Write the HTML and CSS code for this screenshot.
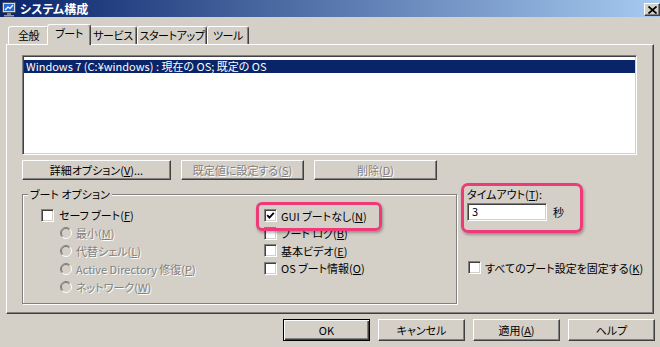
FILE: index.html
```html
<!DOCTYPE html>
<html lang="ja">
<head>
<meta charset="utf-8">
<title>システム構成</title>
<link rel="stylesheet" href="styles.css">
</head>
<body>
<div class="window">
  <header class="titlebar">
    <svg class="app-icon" width="16" height="16" viewBox="0 0 16 16">
      <rect x="1.5" y="1.5" width="13" height="10" rx="1" fill="#d8d8d8" stroke="#505050"/>
      <rect x="3" y="3" width="10" height="7" fill="#2a6ad8"/>
      <path d="M4 9 L7 6 L9 7.5 L12 4" stroke="#fff" stroke-width="1.2" fill="none"/>
      <rect x="6" y="12" width="4" height="2" fill="#808080"/>
      <rect x="3" y="14" width="10" height="1.5" fill="#9a9a9a"/>
    </svg>
    <span class="title">システム構成</span>
    <span class="close">
      <svg width="9" height="8" viewBox="0 0 9 8"><path d="M0.5 0.5 L8.5 7.5 M8.5 0.5 L0.5 7.5" stroke="#000" stroke-width="1.7"/></svg>
    </span>
  </header>
  <main class="client">
    <nav class="tabs">
      <span class="tab">全般</span>
      <span class="tab active">ブート</span>
      <span class="tab">サービス</span>
      <span class="tab">スタートアップ</span>
      <span class="tab">ツール</span>
    </nav>
    <section class="panel">
      <div class="listbox">
        <div class="list-item selected">Windows 7 (C:¥windows) : 現在の OS; 既定の OS</div>
      </div>
      <div class="button-row">
        <button class="btn btn-wide">詳細オプション(<u>V</u>)...</button>
        <button class="btn btn-mid" disabled>既定値に設定する(<u>S</u>)</button>
        <button class="btn btn-mid" disabled>削除(<u>D</u>)</button>
      </div>
      <div class="lower">
        <fieldset class="group">
          <legend>ブート オプション</legend>
          <div class="group-cols">
            <div class="col col-left">
              <div class="opt"><span class="cb"></span><span>セーフ ブート(<u>F</u>)</span></div>
              <div class="opt radio disabled"><svg class="rb" width="12" height="12" viewBox="0 0 12 12"><circle cx="6" cy="6" r="4.5" fill="#d4d0c8"/><path d="M9.9 2.1 A5.5 5.5 0 0 0 2.1 9.9" stroke="#808080" fill="none"/><path d="M2.1 9.9 A5.5 5.5 0 0 0 9.9 2.1" stroke="#fff" fill="none"/><path d="M9.2 2.8 A4.5 4.5 0 0 0 2.8 9.2" stroke="#404040" fill="none" opacity=".55"/></svg><span>最小(<u>M</u>)</span></div>
              <div class="opt radio disabled"><svg class="rb" width="12" height="12" viewBox="0 0 12 12"><circle cx="6" cy="6" r="4.5" fill="#d4d0c8"/><path d="M9.9 2.1 A5.5 5.5 0 0 0 2.1 9.9" stroke="#808080" fill="none"/><path d="M2.1 9.9 A5.5 5.5 0 0 0 9.9 2.1" stroke="#fff" fill="none"/><path d="M9.2 2.8 A4.5 4.5 0 0 0 2.8 9.2" stroke="#404040" fill="none" opacity=".55"/></svg><span>代替シェル(<u>L</u>)</span></div>
              <div class="opt radio disabled"><svg class="rb" width="12" height="12" viewBox="0 0 12 12"><circle cx="6" cy="6" r="4.5" fill="#d4d0c8"/><path d="M9.9 2.1 A5.5 5.5 0 0 0 2.1 9.9" stroke="#808080" fill="none"/><path d="M2.1 9.9 A5.5 5.5 0 0 0 9.9 2.1" stroke="#fff" fill="none"/><path d="M9.2 2.8 A4.5 4.5 0 0 0 2.8 9.2" stroke="#404040" fill="none" opacity=".55"/></svg><span>Active Directory 修復(<u>P</u>)</span></div>
              <div class="opt radio disabled"><svg class="rb" width="12" height="12" viewBox="0 0 12 12"><circle cx="6" cy="6" r="4.5" fill="#d4d0c8"/><path d="M9.9 2.1 A5.5 5.5 0 0 0 2.1 9.9" stroke="#808080" fill="none"/><path d="M2.1 9.9 A5.5 5.5 0 0 0 9.9 2.1" stroke="#fff" fill="none"/><path d="M9.2 2.8 A4.5 4.5 0 0 0 2.8 9.2" stroke="#404040" fill="none" opacity=".55"/></svg><span>ネットワーク(<u>W</u>)</span></div>
            </div>
            <div class="col col-right">
              <div class="opt highlight-gui"><span class="cb checked"><svg width="9" height="9" viewBox="0 0 9 9"><path d="M1.2 4.2 L3.4 6.6 L7.8 1.8" stroke="#000" stroke-width="1.8" fill="none"/></svg></span><span>GUI ブートなし(<u>N</u>)</span></div>
              <div class="opt"><span class="cb"></span><span>ブート ログ(<u>B</u>)</span></div>
              <div class="opt"><span class="cb"></span><span>基本ビデオ(<u>E</u>)</span></div>
              <div class="opt"><span class="cb"></span><span>OS ブート情報(<u>O</u>)</span></div>
            </div>
          </div>
        </fieldset>
        <div class="side">
          <div class="timeout">
            <div class="timeout-label">タイムアウト(<u>T</u>):</div>
            <div class="timeout-row"><span class="textbox">3</span><span class="unit">秒</span></div>
          </div>
          <div class="opt fixed"><span class="cb"></span><span>すべてのブート設定を固定する(<u>K</u>)</span></div>
        </div>
      </div>
    </section>
    <footer class="dialog-buttons">
      <button class="btn btn-dialog btn-default">OK</button>
      <button class="btn btn-dialog">キャンセル</button>
      <button class="btn btn-dialog">適用(<u>A</u>)</button>
      <button class="btn btn-dialog">ヘルプ</button>
    </footer>
  </main>
</div>
</body>
</html>
```

FILE: styles.css
```css
* { box-sizing: border-box; }
html, body { margin: 0; padding: 0; }
body {
  width: 660px;
  height: 347px;
  overflow: hidden;
  background: #d4d0c8;
  font-family: "Noto Sans CJK JP", "Noto Sans", sans-serif;
  font-size: 11px;
  font-feature-settings: "palt";
  color: #000;
}
u { text-underline-offset: 1px; }

/* title bar */
.titlebar {
  height: 17px;
  display: flex;
  align-items: center;
  padding-left: 1px;
  background: linear-gradient(to right, #0a246a, #a6caf0);
}
.app-icon { flex: none; margin-right: 3px; }
.title {
  flex: 1;
  color: #fff;
  font-weight: bold;
  font-size: 12px;
  line-height: 17px;
}
.close {
  align-self: flex-start;
  margin-top: 3px;
  width: 16px;
  height: 13px;
  display: flex;
  align-items: center;
  justify-content: center;
  background: #d4d0c8;
  border: 1px solid;
  border-color: #fff #404040 #404040 #fff;
  box-shadow: inset -1px -1px #808080;
}

/* client */
.client { padding-top: 7px; }

.tabs {
  display: flex;
  align-items: flex-end;
  height: 20px;
  padding-left: 8px;
  position: relative;
  z-index: 1;
}
.tab {
  height: 18px;
  padding: 0;
  line-height: 16px;
  letter-spacing: -0.4px;
  text-align: center;
  border: 1px solid;
  border-bottom: none;
  border-color: #fff #404040 transparent #fff;
  border-radius: 3px 3px 0 0;
  box-shadow: inset -1px 0 #808080;
  white-space: nowrap;
}
.tab:nth-child(1) { width: 41px; }
.tab:nth-child(3) { width: 48px; }
.tab:nth-child(4) { width: 70px; }
.tab:nth-child(5) { width: 42px; }
.tab.active {
  width: 44px;
  height: 21px;
  margin: 0 -2px -1px;
  line-height: 17px;
  background: #d4d0c8;
  position: relative;
  z-index: 1;
}

.panel {
  margin-left: 6px;
  width: 648px;
  height: 270px;
  border: 1px solid;
  border-color: #fff #404040 #404040 #fff;
  box-shadow: inset -1px -1px #808080;
  padding: 10px 16px 0 15px;
}

.listbox {
  height: 100px;
  background: #fff;
  border: 1px solid;
  border-color: #808080 #fff #fff #808080;
  box-shadow: inset 1px 1px #404040, inset -1px -1px #d4d0c8;
  padding: 4px 1px 0;
}
.list-item {
  height: 13px;
  line-height: 13px;
  padding-left: 2px;
  white-space: nowrap;
}
.list-item.selected { background: #0a246a; color: #fff; }

/* buttons */
.btn {
  font: inherit;
  font-feature-settings: inherit;
  color: #000;
  background: #d4d0c8;
  border: 1px solid;
  border-color: #fff #404040 #404040 #fff;
  box-shadow: inset -1px -1px #808080;
  padding: 0;
  margin: 0;
  white-space: nowrap;
}
.btn:disabled { color: #808080; text-shadow: 1px 1px 0 #fff; }
.button-row { display: flex; gap: 10px; margin-top: 5px; }
.button-row .btn { height: 20px; line-height: 17px; }
.btn-wide { width: 149px; }
.btn-mid { width: 123px; }

/* lower */
.lower { display: flex; margin-top: 7px; }
.group {
  flex: none;
  width: 435px;
  height: 117px;
  margin: 0;
  padding: 0;
  min-width: 0;
  border: 1px solid #808080;
  box-shadow: 1px 1px 0 #fff, inset 1px 1px 0 #fff;
}
.group legend {
  margin-left: 5px;
  padding: 0 2px;
  line-height: 14px;
  background: #d4d0c8;
}
.group-cols { display: flex; padding-top: 5px; }
.col-left { width: 223px; margin-left: 18px; flex: none; }
.col-right { padding-top: 1px; }

.opt {
  display: flex;
  align-items: center;
  height: 18px;
  white-space: nowrap;
}
.col-right .opt { height: 17.5px; }
.cb {
  flex: none;
  width: 13px;
  height: 13px;
  margin-right: 5px;
  background: #fff;
  border: 1px solid;
  border-color: #808080 #fff #fff #808080;
  box-shadow: inset 1px 1px #404040, inset -1px -1px #d4d0c8;
  display: flex;
  align-items: center;
  justify-content: center;
}
.col-right .cb { margin-right: 4px; }
.opt.radio { padding-left: 19px; }
.rb { flex: none; margin-right: 4px; }
.disabled { color: #808080; text-shadow: 1px 1px 0 #fff; }

.highlight-gui { position: relative; }
.highlight-gui::before {
  content: "";
  position: absolute;
  left: -8px;
  top: -5px;
  width: 120px;
  height: 23px;
  border: 3px solid #ee3a78;
  border-radius: 6px;
  box-shadow: 1px 2px 3px rgba(0,0,0,.3);
}

.side { flex: none; margin-left: 10px; }
.timeout { position: relative; }
.timeout::before {
  content: "";
  position: absolute;
  left: -6px;
  top: -4px;
  width: 116px;
  height: 44px;
  border: 3px solid #ee3a78;
  border-radius: 7px;
  box-shadow: 1px 2px 3px rgba(0,0,0,.3);
}
.timeout-label { line-height: 14px; }
.timeout-row { display: flex; align-items: center; margin-top: 2px; }
.textbox {
  width: 80px;
  height: 18px;
  line-height: 15px;
  padding-left: 4px;
  background: #fff;
  border: 1px solid;
  border-color: #808080 #fff #fff #808080;
  box-shadow: inset 1px 1px #404040, inset -1px -1px #d4d0c8;
}
.unit { margin-left: 6px; }
.opt.fixed { height: 15px; margin-top: 39px; margin-left: 1px; }
.opt.fixed .cb { margin-right: 4px; }

.dialog-buttons {
  display: flex;
  justify-content: flex-end;
  gap: 8px;
  padding-right: 5px;
  margin-top: 5px;
}
.btn-dialog { width: 87px; height: 22px; line-height: 19px; }
.btn-default {
  border: 1px solid #000;
  box-shadow: inset 1px 1px #fff, inset -1px -1px #404040, inset -2px -2px #808080;
}
```
